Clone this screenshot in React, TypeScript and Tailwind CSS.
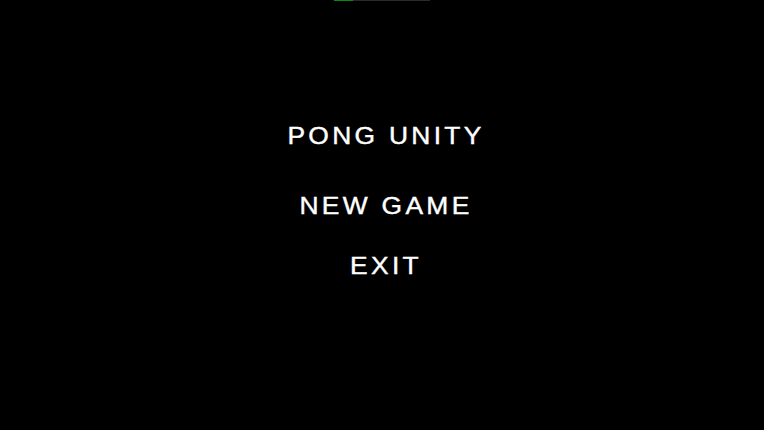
export default function App() {
  return (
    <div className="relative h-[430px] w-full overflow-hidden bg-black font-['Liberation_Sans',Arial,sans-serif] text-white">
      <div className="flex justify-center">
        <div className="flex h-px w-[96px] bg-[#2a2a2a]">
          <div className="h-px w-[19px] bg-[#0b8a12]" />
        </div>
      </div>
      <div className="flex flex-col items-center pt-[123px] [-webkit-text-stroke:0.4px_white]">
        <h1 className="scale-x-[1.1] pl-[7px] text-[24px] leading-none tracking-[3px]">PONG UNITY</h1>
        <button className="mt-[46px] scale-x-[1.1] pl-[7px] text-[24px] leading-none tracking-[3px]">NEW GAME</button>
        <button className="mt-[36px] scale-x-[1.1] pl-[7px] text-[24px] leading-none tracking-[3px]">EXIT</button>
      </div>
    </div>
  );
}
